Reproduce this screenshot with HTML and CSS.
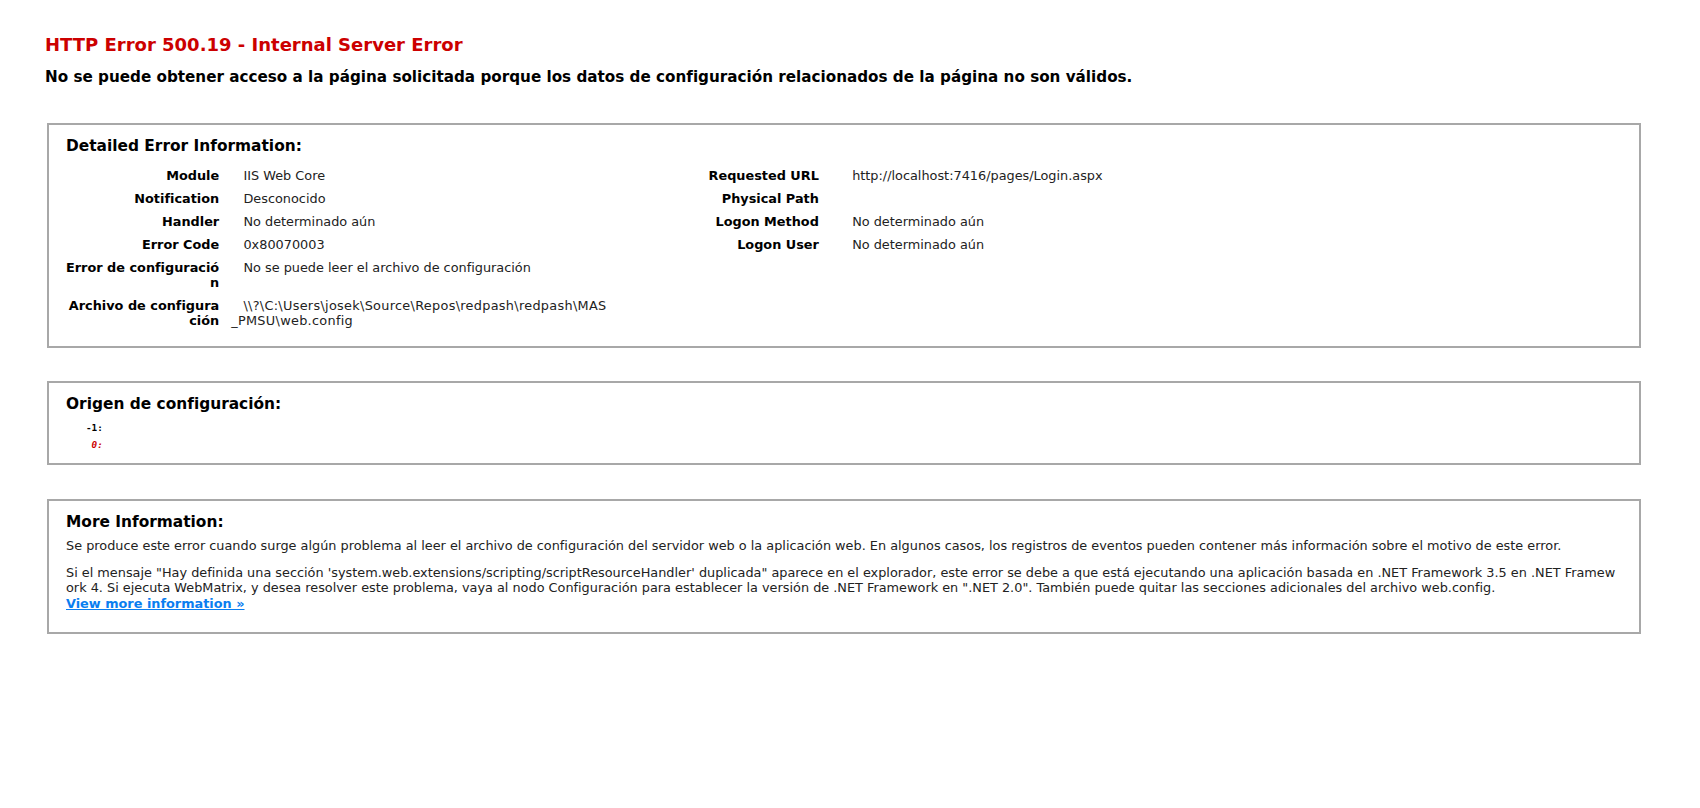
FILE: index.html
```html
<!DOCTYPE html>
<html lang="es">
<head>
<meta charset="utf-8">
<title>IIS 10.0 Detailed Error - 500.19 - Internal Server Error</title>
<link rel="stylesheet" href="styles.css">
</head>
<body>
<div class="page">
  <div class="intro">
    <h1 class="title">HTTP Error 500.19 - Internal Server Error</h1>
    <h2 class="subtitle">No se puede obtener acceso a la página solicitada porque los datos de configuración relacionados de la página no son válidos.</h2>
  </div>

  <section class="box details">
    <h3 class="box-title">Detailed Error Information:</h3>
    <div class="details-cols">
      <table class="kv kv-left">
        <tr><th>Module</th><td>&nbsp;&nbsp;&nbsp;IIS Web Core</td></tr>
        <tr><th>Notification</th><td>&nbsp;&nbsp;&nbsp;Desconocido</td></tr>
        <tr><th>Handler</th><td>&nbsp;&nbsp;&nbsp;No determinado aún</td></tr>
        <tr><th>Error Code</th><td>&nbsp;&nbsp;&nbsp;0x80070003</td></tr>
        <tr><th>Error de configuració<br>n</th><td>&nbsp;&nbsp;&nbsp;No se puede leer el archivo de configuración</td></tr>
        <tr><th>Archivo de configura<br>ción</th><td>&nbsp;&nbsp;&nbsp;<span class="path">\\?\C:\Users\josek\Source\Repos\redpash\redpash\MAS<br>_PMSU\web.config</span></td></tr>
      </table>
      <table class="kv kv-right">
        <tr><th>Requested URL</th><td>&nbsp;&nbsp;&nbsp;http://localhost:7416/pages/Login.aspx</td></tr>
        <tr><th>Physical Path</th><td>&nbsp;&nbsp;&nbsp;</td></tr>
        <tr><th>Logon Method</th><td>&nbsp;&nbsp;&nbsp;No determinado aún</td></tr>
        <tr><th>Logon User</th><td>&nbsp;&nbsp;&nbsp;No determinado aún</td></tr>
      </table>
    </div>
  </section>

  <section class="box origin">
    <h3 class="box-title">Origen de configuración:</h3>
    <div class="config-source">
      <code class="code-line">-1: </code>
      <code class="code-line highlight-code"> 0: </code>
    </div>
  </section>

  <section class="box more">
    <h3 class="box-title">More Information:</h3>
    <p class="first">Se produce este error cuando surge algún problema al leer el archivo de configuración del servidor web o la aplicación web. En algunos casos, los registros de eventos pueden contener más información sobre el motivo de este error.</p>
    <p>Si el mensaje "Hay definida una sección 'system.web.extensions/scripting/scriptResourceHandler' duplicada" aparece en el explorador, este error se debe a que está ejecutando una aplicación basada en .NET Framework 3.5 en .NET Framew<br>ork 4. Si ejecuta WebMatrix, y desea resolver este problema, vaya al nodo Configuración para establecer la versión de .NET Framework en ".NET 2.0". También puede quitar las secciones adicionales del archivo web.config.<br><a class="more-link" href="#">View more information »</a></p>
  </section>
</div>
</body>
</html>
```

FILE: styles.css
```css
html, body {
  margin: 0;
  padding: 0;
  background: #fff;
}

body {
  font-family: "DejaVu Sans", Verdana, sans-serif;
  font-size: 12.85px;
  line-height: 15.4px;
  color: #000;
}

.page {
  padding: 32.6px 59px 40px 47px;
}

.intro {
  margin-left: -2px;
}

.title {
  margin: 0;
  font-size: 18px;
  line-height: 24px;
  font-weight: bold;
  color: #cc0000;
}

.subtitle {
  margin: 10.2px 0 0 0;
  font-size: 15.2px;
  line-height: 20px;
  font-weight: bold;
  color: #000;
}

.box {
  border: 2px solid #a8a8a8;
  padding: 11.5px 17px 9px 17px;
}

.details {
  margin-top: 36px;
  padding-bottom: 13.4px;
}

.origin {
  margin-top: 33px;
  padding-bottom: 8.9px;
}

.more {
  margin-top: 34.3px;
}

.box-title {
  margin: 0;
  font-size: 15.4px;
  line-height: 20px;
  font-weight: bold;
  color: #000;
}

.details-cols {
  display: grid;
  grid-template-columns: 600px 1fr;
  align-items: start;
  margin-top: 8.5px;
}

.kv {
  border-collapse: collapse;
  border-spacing: 0;
}

.kv th,
.kv td {
  vertical-align: top;
  padding: 3.7px 0;
  text-align: left;
  white-space: nowrap;
}

.kv th {
  box-sizing: border-box;
  text-align: right;
  font-weight: bold;
  color: #000;
}

.kv-left th {
  width: 164.5px;
  min-width: 164.5px;
  padding-right: 12px;
}

.kv-right th {
  width: 173.9px;
  min-width: 173.9px;
  padding-right: 21px;
}

.kv td {
  color: #222;
}

.path {
  letter-spacing: 0.3px;
}

.config-source {
  display: flex;
  flex-direction: column;
  align-items: flex-start;
  margin: 6.2px 0 0 20px;
}

.code-line {
  display: block;
  white-space: pre;
  font-family: "DejaVu Sans Mono", "Liberation Mono", monospace;
  font-size: 9.3px;
  line-height: 16.7px;
  font-weight: bold;
  color: #000;
}

.highlight-code {
  color: #cc0000;
  font-style: italic;
}

.more p {
  margin: 0 0 12px 0;
  white-space: nowrap;
  color: #222;
}

.more p.first {
  margin-top: 5.2px;
}

.more-link {
  color: #0a7ef0;
  font-weight: bold;
  text-decoration: underline;
}
```
